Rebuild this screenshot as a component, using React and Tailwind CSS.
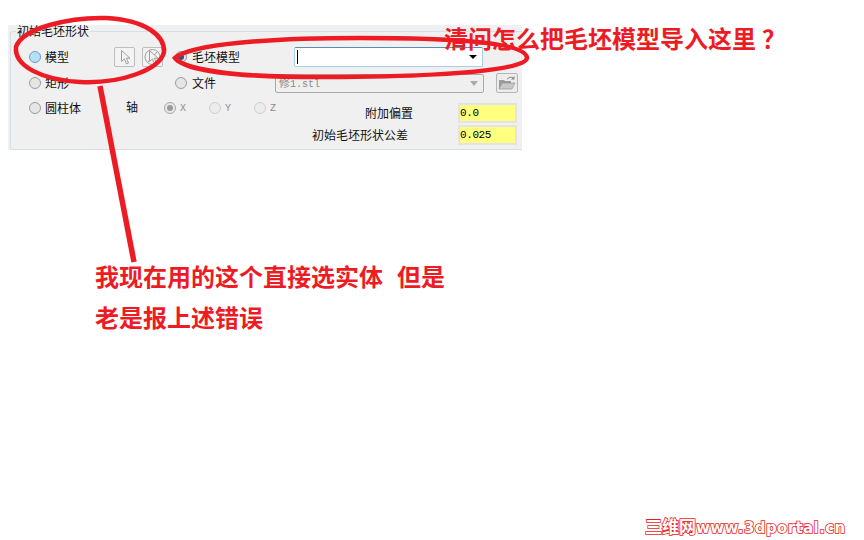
const cjk = 'font-["Noto_Sans_CJK_SC",sans-serif]'

function Radio({ kind = 'plain' }) {
  if (kind === 'hover') {
    return <span className="w-[12px] h-[12px] rounded-full border border-[#6f9fc0] bg-[#b5e0f8] shrink-0" />
  }
  if (kind === 'checked') {
    return (
      <span className="w-[12px] h-[12px] rounded-full border border-[#8a9aa5] bg-[#e4e4e4] shrink-0 flex items-center justify-center">
        <span className="w-[6px] h-[6px] rounded-full bg-[#14598c]" />
      </span>
    )
  }
  if (kind === 'disabledChecked') {
    return (
      <span className="w-[12px] h-[12px] rounded-full border border-[#a8a8a8] bg-[#e8e8e8] shrink-0 flex items-center justify-center">
        <span className="w-[6px] h-[6px] rounded-full bg-[#9a9a9a]" />
      </span>
    )
  }
  if (kind === 'disabled') {
    return <span className="w-[12px] h-[12px] rounded-full border border-[#cfcfcf] bg-[#ececec] shrink-0" />
  }
  return <span className="w-[12px] h-[12px] rounded-full border border-[#9b9b9b] bg-[#e6e6e6] shrink-0" />
}

function ToolButton({ crossed }) {
  return (
    <div className="w-[21px] h-[20px] rounded-[2px] border border-[#bdbdbd] bg-[#f3f3f3] flex items-center justify-center shrink-0">
      <svg width="19" height="18" viewBox="0 0 19 18" fill="none" stroke="#a0a0a0">
        {crossed && <circle cx="9.5" cy="9" r="7.5" />}
        {crossed && <path d="M4.5 14.5 14.5 3.5" />}
        <path d="M6.5 2.5v11l2.8-2.6 2.2 5 2-.9-2.2-4.8h3.7z" fill="#f3f3f3" />
      </svg>
    </div>
  )
}

function Field({ value }) {
  return (
    <div className="w-[59px] h-[20px] border-2 border-[#e3e3e3] bg-[#ffff80] flex items-center font-['Liberation_Mono',monospace] text-[11px] tracking-[-0.4px] text-black shrink-0">
      {value}
    </div>
  )
}

function AxisOption({ kind, label }) {
  return (
    <div className="w-[45px] flex items-center gap-[4px] shrink-0">
      <Radio kind={kind} />
      <span className="font-['Liberation_Mono',monospace] text-[10px] text-[#8a8a8a]">{label}</span>
    </div>
  )
}

export default function App() {
  return (
    <div className={`relative w-[864px] h-[540px] bg-white overflow-hidden pt-[25px] text-[12px] text-[#111] ${cjk}`}>
      {/* dialog group */}
      <div className="ml-[8px] w-[514px] h-[125px] bg-[#f0f0f0] pl-[2px]">
        <fieldset className="h-[125px] border border-r-0 border-[#d5dfe5] rounded-l-[3px]">
          <legend className="ml-[5px] px-[1px] leading-[12px] text-[12px]">初始毛坯形状</legend>

          <div className="flex items-center h-[20px] mt-[10px] pl-[18px]">
            <div className="w-[85px] flex items-center gap-[4px] shrink-0">
              <Radio kind="hover" />
              <span>模型</span>
            </div>
            <div className="flex gap-[7px] shrink-0">
              <ToolButton />
              <ToolButton crossed />
            </div>
            <div className="ml-[12px] w-[119px] flex items-center gap-[5px] shrink-0">
              <Radio kind="checked" />
              <span>毛坯模型</span>
            </div>
            <div className="w-[189px] h-[20px] rounded-[2px] border border-[#a9cde4] border-t-[#5b8db3] bg-white flex items-center justify-between pl-[2px] pr-[5px]">
              <span className="w-px h-[14px] bg-black" />
              <span className="border-x-[4px] border-t-[4px] border-x-transparent border-t-black" />
            </div>
          </div>

          <div className="flex items-center h-[20px] mt-[6px] pl-[18px]">
            <div className="w-[146px] flex items-center gap-[4px] shrink-0">
              <Radio />
              <span>矩形</span>
            </div>
            <div className="w-[100px] flex items-center gap-[5px] shrink-0">
              <Radio />
              <span>文件</span>
            </div>
            <div className="w-[209px] h-[19px] rounded-[2px] border border-[#ababab] bg-[#efefef] flex items-center justify-between pl-[3px] pr-[5px] shrink-0">
              <span className="text-[#8a8a8a] text-[11px]">修<span className="font-['Liberation_Mono',monospace] text-[10px]">1.stl</span></span>
              <span className="border-x-[4px] border-t-[5px] border-x-transparent border-t-[#a8a8a8]" />
            </div>
            <div className="ml-[12px] w-[22px] h-[20px] rounded-[2px] border border-[#b5b5b5] bg-[#ececec] flex items-center justify-center shrink-0">
              <svg width="18" height="16" viewBox="0 0 18 16">
                <path d="M1 5h5l1 1h6v8H1z" fill="#9c9c9c" />
                <path d="M1 14 4 8h13l-3 6z" fill="#c8c8c8" stroke="#8c8c8c" strokeWidth="0.6" />
                <path d="M9 4q3-3 6-1.5" fill="none" stroke="#8c8c8c" strokeWidth="1" />
                <path d="M16.5 1v3.5H13z" fill="#8c8c8c" />
              </svg>
            </div>
          </div>

          <div className="flex pl-[18px] mt-[5px]">
            <div className="flex items-center h-[20px]">
              <div className="w-[97px] flex items-center gap-[4px] shrink-0">
                <Radio />
                <span>圆柱体</span>
              </div>
              <span className="w-[38px] shrink-0 -mt-[3px]">轴</span>
              <AxisOption kind="disabledChecked" label="X" />
              <AxisOption kind="disabled" label="Y" />
              <AxisOption kind="disabled" label="Z" />
            </div>
            <div className="flex-1 pt-[5px] pr-[5px] flex flex-col gap-[2px]">
              <div className="flex items-center justify-end h-[20px]">
                <span className="mr-[45px]">附加偏置</span>
                <Field value="0.0" />
              </div>
              <div className="flex items-center justify-end h-[20px]">
                <span className="mr-[50px]">初始毛坯形状公差</span>
                <Field value="0.025" />
              </div>
            </div>
          </div>
        </fieldset>
      </div>

      {/* note below the dialog */}
      <div className="mt-[105px] ml-[95px] text-[24px] leading-[41px] font-bold text-[#ed1c24] whitespace-nowrap">
        <p>我现在用的这个直接选实体<span className="ml-[14px]">但是</span></p>
        <p>老是报上述错误</p>
      </div>

      {/* hand drawn marks on top of the screenshot */}
      <svg className="absolute inset-0 pointer-events-none" width="864" height="540" fill="none" stroke="#ed1c24" strokeWidth="4.5">
        <path d="M16 47C22 28 70 17 106 18C146 20 165 36 164 52C160 70 120 84 80 82C42 80 14 66 16 47Z" />
        <path d="M175 58C190 44 270 38 360 38C450 38 526 42 527 58C526 70 450 76 340 77C250 78 186 72 175 58Z" />
        <path d="M100 86 134 262" strokeWidth="5.5" />
      </svg>

      <p className="absolute left-[444px] top-[21px] text-[24px] leading-[34px] font-bold text-[#ed1c24] whitespace-nowrap">清问怎么把毛坯模型导入这里<span className="ml-[6px]">？</span></p>

      {/* watermark */}
      <p className="absolute left-[645px] top-[517px] whitespace-nowrap text-white text-[17px] leading-[18px] font-bold [-webkit-text-stroke:1.6px_#ed1c24] [paint-order:stroke]">
        三维网<span className="font-['DejaVu_Sans',sans-serif] text-[15px] tracking-[0.4px]">www.3dportal.cn</span>
      </p>
    </div>
  )
}
